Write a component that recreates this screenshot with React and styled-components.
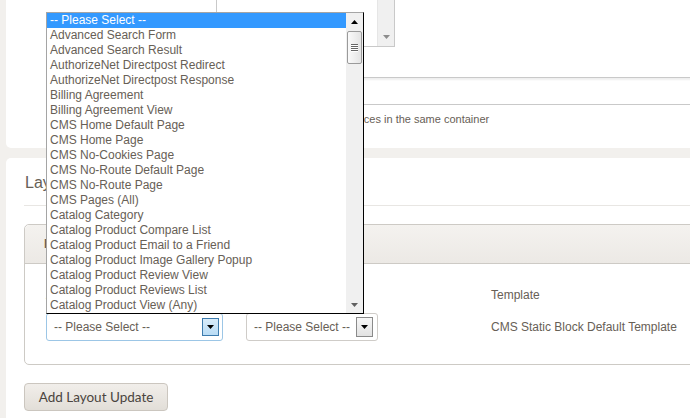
import React from "react";
import styled, { createGlobalStyle } from "styled-components";

const Global = createGlobalStyle`
  html, body { margin: 0; padding: 0; background: #f2f0ed; overflow: hidden; }
  body { font-family: "Liberation Sans", Arial, sans-serif; font-size: 12px; color: #676056; }
`;

const Page = styled.div`
  width: 740px;
  margin-top: -54px;
  display: flex;
  flex-direction: column;
  gap: 10px;
  padding-left: 6px;
`;

const Panel = styled.section`
  background: #fff;
  border-radius: 5px;
  padding: ${(p) => p.$pad};
  display: flex;
  flex-direction: column;
`;

const FieldRow = styled.div`
  padding-left: 210px;
  margin-top: ${(p) => p.$mt || 0}px;
`;

const MultiSelect = styled.div`
  width: 177px;
  height: 99px;
  border: 1px solid #c9c9c9;
  display: flex;
  justify-content: flex-end;
`;

const MiniScroll = styled.div`
  width: 16px;
  background: #f0f0f0;
  border-left: 1px solid #e6e6e6;
  display: flex;
  flex-direction: column;
  justify-content: flex-end;
  align-items: center;
  padding-bottom: 7px;
`;

const TextInput = styled.div`
  width: 520px;
  height: 26px;
  border: 1px solid #c9c9c9;
  box-shadow: inset 0 2px 2px #efefef;
`;

const Note = styled.div`
  margin-top: 7px;
  font-size: 11px;
  line-height: 15px;
  white-space: nowrap;
  margin-left: 17px;
`;

const Heading = styled.h2`
  margin: 0;
  font-size: 16px;
  font-weight: normal;
  line-height: 20px;
  padding: 0 0 12px 1px;
  border-bottom: 1px solid #e8e6e3;
  color: #676056;
`;

const Box = styled.div`
  margin-top: 18px;
  border: 1px solid #cdcac5;
  border-radius: 5px;
`;

const BoxHeader = styled.div`
  height: 38px;
  border-bottom: 1px solid #cdcac5;
  background: linear-gradient(#f4f2ef, #ece9e5);
  border-radius: 5px 5px 0 0;
  display: flex;
  align-items: center;
  padding-left: 19px;
  font-weight: bold;
`;

const BoxBody = styled.div`
  padding: 24px 0 23px 21px;
  display: grid;
  grid-template-columns: 200px 245px auto;
  row-gap: 10px;
  align-items: center;
`;

const ColHead = styled.div`
  line-height: 15px;
`;

const SelectWrap = styled.div`
  position: relative;
  width: ${(p) => p.$w}px;
`;

const Select = styled.div`
  box-sizing: border-box;
  height: 28px;
  width: 100%;
  border: 1px solid ${(p) => (p.$focus ? "#9cc6e6" : "#cfccc8")};
  border-radius: 3px;
  display: flex;
  align-items: center;
  justify-content: space-between;
  padding: 0 3px 0 7px;
  white-space: nowrap;
`;

const ArrowBtn = styled.div`
  box-sizing: border-box;
  width: 17px;
  height: ${(p) => (p.$focus ? 18 : 20)}px;
  border: 1px solid ${(p) => (p.$focus ? "#3d7bad" : "#8a8a8a")};
  background: ${(p) => (p.$focus ? "linear-gradient(#d9ecfa, #b9dcf5)" : "linear-gradient(#f7f7f7, #e2e2e2)")};
  display: flex;
  align-items: center;
  justify-content: center;
  margin-right: ${(p) => (p.$focus ? 0 : 1)}px;
`;

const Tri = ({ color = "#000", up, size = 7 }) => (
  <svg width={size} height={4} viewBox="0 0 7 4">
    <path d={up ? "M0 4 L3.5 0 L7 4 Z" : "M0 0 L7 0 L3.5 4 Z"} fill={color} />
  </svg>
);

const Value = styled.div`
  line-height: 15px;
  white-space: nowrap;
`;

const Button = styled.button`
  margin-top: 18px;
  align-self: flex-start;
  width: 144px;
  height: 28px;
  border: 1px solid #cbc6bf;
  border-radius: 4px;
  background: linear-gradient(#f1eeea, #e2ded8);
  font-family: Lato, "Open Sans", sans-serif;
  font-size: 13.5px;
  color: #4a443e;
  padding: 0;
  cursor: pointer;
`;

const Dropdown = styled.div`
  position: absolute;
  left: 0;
  bottom: calc(100% - 1px);
  width: 318px;
  box-sizing: border-box;
  border-top: 1px solid #a5a5a5;
  border-left: 1px solid #a5a5a5;
  border-right: 1px solid #000;
  border-bottom: 1px solid #000;
  background: #fff;
  display: flex;
  z-index: 5;
`;

const Options = styled.ul`
  list-style: none;
  margin: 0;
  padding: 0;
  flex: 1;
`;

const Option = styled.li`
  height: 15px;
  line-height: 15px;
  padding-left: 3px;
  white-space: nowrap;
  background: ${(p) => (p.$active ? "#3399ff" : "transparent")};
  color: ${(p) => (p.$active ? "#fff" : "#676056")};
`;

const Scrollbar = styled.div`
  width: 17px;
  background: #f0f0f0;
  display: flex;
  flex-direction: column;
  align-items: center;
`;

const ScrollArrow = styled.div`
  height: 17px;
  width: 100%;
  display: flex;
  align-items: center;
  justify-content: center;
`;

const Thumb = styled.div`
  box-sizing: border-box;
  width: 15px;
  height: 33px;
  margin-top: 1px;
  border: 1px solid #9a9a9a;
  border-radius: 2px;
  background: linear-gradient(90deg, #fafafa, #e4e4e4);
  display: flex;
  flex-direction: column;
  align-items: center;
  justify-content: center;
  gap: 1px;
`;

const Grip = styled.span`
  width: 7px;
  height: 1px;
  background: #666;
  box-shadow: 0 1px 0 #fff;
`;

const Track = styled.div`
  flex: 1;
`;

const options = [
  "-- Please Select --",
  "Advanced Search Form",
  "Advanced Search Result",
  "AuthorizeNet Directpost Redirect",
  "AuthorizeNet Directpost Response",
  "Billing Agreement",
  "Billing Agreement View",
  "CMS Home Default Page",
  "CMS Home Page",
  "CMS No-Cookies Page",
  "CMS No-Route Default Page",
  "CMS No-Route Page",
  "CMS Pages (All)",
  "Catalog Category",
  "Catalog Product Compare List",
  "Catalog Product Email to a Friend",
  "Catalog Product Image Gallery Popup",
  "Catalog Product Review View",
  "Catalog Product Reviews List",
  "Catalog Product View (Any)",
];

export default function App() {
  return (
    <>
      <Global />
      <Page>
        <Panel $pad="0 0 21px 0">
          <FieldRow>
            <MultiSelect>
              <MiniScroll>
                <Tri color="#8c8c8c" />
              </MiniScroll>
            </MultiSelect>
          </FieldRow>
          <FieldRow $mt={30}>
            <TextInput />
            <Note>Sort Order of widget instances in the same container</Note>
          </FieldRow>
        </Panel>
        <Panel $pad="15px 0 40px 18px">
          <Heading>Layout Updates</Heading>
          <Box>
            <BoxHeader>Display on</BoxHeader>
            <BoxBody>
              <ColHead>Anchor Categories</ColHead>
              <ColHead>Container</ColHead>
              <ColHead>Template</ColHead>
              <SelectWrap $w={177}>
                <Dropdown>
                  <Options>
                    {options.map((o, i) => (
                      <Option key={o} $active={i === 0}>
                        {o}
                      </Option>
                    ))}
                  </Options>
                  <Scrollbar>
                    <ScrollArrow>
                      <Tri up />
                    </ScrollArrow>
                    <Thumb>
                      <Grip />
                      <Grip />
                      <Grip />
                      <Grip />
                    </Thumb>
                    <Track />
                    <ScrollArrow>
                      <Tri color="#606060" />
                    </ScrollArrow>
                  </Scrollbar>
                </Dropdown>
                <Select $focus>
                  -- Please Select --
                  <ArrowBtn $focus>
                    <Tri />
                  </ArrowBtn>
                </Select>
              </SelectWrap>
              <SelectWrap $w={132}>
                <Select>
                  -- Please Select --
                  <ArrowBtn>
                    <Tri />
                  </ArrowBtn>
                </Select>
              </SelectWrap>
              <Value>CMS Static Block Default Template</Value>
            </BoxBody>
          </Box>
          <Button>Add Layout Update</Button>
        </Panel>
      </Page>
    </>
  );
}
